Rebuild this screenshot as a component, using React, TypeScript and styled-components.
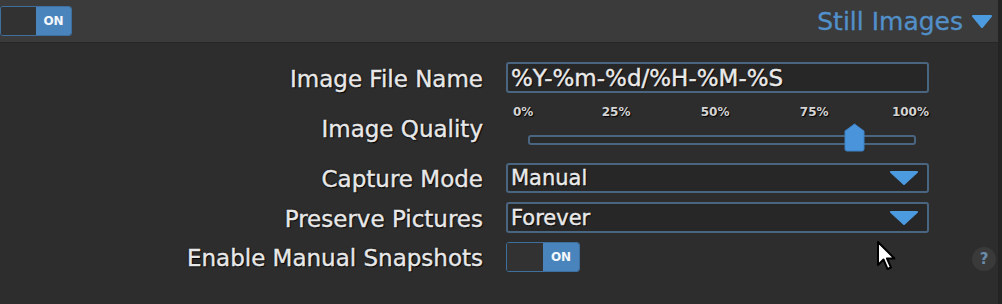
import React from 'react';
import styled, { createGlobalStyle } from 'styled-components';

const GlobalStyle = createGlobalStyle`
  html, body {
    margin: 0;
    padding: 0;
    background: #2d2d2d;
  }
  body {
    font-family: "DejaVu Sans", "Liberation Sans", sans-serif;
  }
`;

const Panel = styled.div`
  position: relative;
  width: 1002px;
  height: 304px;
  box-sizing: border-box;
  background: #2d2d2d;
  border-right: 4px solid #242424;
  overflow: hidden;
`;

const TopBar = styled.div`
  height: 43px;
  box-sizing: border-box;
  display: flex;
  align-items: center;
  justify-content: space-between;
  padding: 0 6px 0 0;
  background: #3b3b3b;
  border-bottom: 1px solid #262626;
`;

const Toggle = styled.div`
  display: flex;
  width: ${(p: { w: number }) => p.w}px;
  height: 30px;
  box-sizing: border-box;
  border: 1px solid #3f6f9e;
  border-radius: 3px;
  overflow: hidden;
`;

const ToggleOff = styled.div`
  flex: 1;
  background: #323232;
`;

const ToggleOn = styled.div`
  flex: 1;
  display: flex;
  align-items: center;
  justify-content: center;
  background: #4a84bd;
  color: #f4f8fc;
  font-weight: bold;
  font-size: 12px;
`;

const SectionTitle = styled.div`
  display: flex;
  align-items: center;
  gap: 9px;
  color: #5290c9;
  font-size: 25px;
  -webkit-text-stroke: 0.3px #5290c9;
`;

const Form = styled.div`
  display: grid;
  grid-template-columns: 483px 423px;
  column-gap: 23px;
  row-gap: 9px;
  padding-top: 19px;
`;

const Label = styled.div`
  display: flex;
  align-items: center;
  justify-content: flex-end;
  padding-top: 2px;
  color: #e8e8e8;
  font-size: 23px;
  white-space: nowrap;
  -webkit-text-stroke: 0.4px #e8e8e8;
  text-shadow: 1px 1px 1px #000, 0 0 2px #000;
`;

const Field = styled.div`
  height: ${(p: { h: number }) => p.h}px;
  box-sizing: border-box;
  display: flex;
  align-items: center;
  justify-content: space-between;
  padding: 0 9px 0 3px;
  background: #272727;
  border: 2px solid #4a6580;
  border-radius: 3px;
  color: #eaeaea;
  font-size: ${(p: { h: number; fs?: number }) => p.fs ?? 23}px;
  -webkit-text-stroke: 0.4px #eaeaea;
  text-shadow: 1px 1px 1px #000;
`;

const SliderBox = styled.div`
  height: 52px;
  display: flex;
  flex-direction: column;
`;

const Ticks = styled.div`
  display: flex;
  justify-content: space-between;
  padding: 3px 0 0 7px;
  color: #d4d4d4;
  font-size: 12px;
  font-weight: bold;
  line-height: 14px;
  text-shadow: 1px 1px 1px #000;
`;

const Tick = styled.span<{ $shift: number }>`
  margin-left: ${(p) => p.$shift}px;
`;

const Track = styled.div`
  position: relative;
  height: 10px;
  margin: 16px 13px 0 22px;
  box-sizing: border-box;
  background: #2a2a2a;
  border: 2px solid #4a6580;
  border-radius: 3px;
`;

const Thumb = styled.svg`
  position: absolute;
  top: -14px;
  width: 21px;
  height: 29px;
`;

const ToggleCell = styled.div`
  display: flex;
  align-items: center;
`;

const Help = styled.div`
  position: absolute;
  right: 2px;
  top: 247px;
  width: 24px;
  height: 24px;
  border-radius: 50%;
  background: #3a3a3a;
  color: #6a8cab;
  font-size: 15px;
  font-weight: bold;
  display: flex;
  align-items: center;
  justify-content: center;
`;

const Cursor = styled.svg`
  position: absolute;
  left: 876px;
  top: 240px;
  width: 22px;
  height: 33px;
`;

const Caret = ({ w, h }: { w: number; h: number }) => (
  <svg width={w} height={h} viewBox={`0 0 ${w} ${h}`}>
    <polygon points={`1,1 ${w - 1},1 ${w / 2},${h - 1}`} fill="#4c9be0" stroke="#4c9be0" strokeLinejoin="round" strokeWidth="2" />
  </svg>
);

const OnSwitch = ({ w }: { w: number }) => (
  <Toggle w={w}>
    <ToggleOff />
    <ToggleOn>ON</ToggleOn>
  </Toggle>
);

const ticks = [
  { text: '0%', shift: 0 },
  { text: '25%', shift: 5 },
  { text: '50%', shift: 7 },
  { text: '75%', shift: 7 },
  { text: '100%', shift: 0 },
];

const quality = 84.3;

export default function App() {
  return (
    <Panel>
      <GlobalStyle />
      <TopBar>
        <OnSwitch w={72} />
        <SectionTitle>
          Still Images
          <Caret w={20} h={13} />
        </SectionTitle>
      </TopBar>
      <Form>
        <Label>Image File Name</Label>
        <Field h={31}>%Y-%m-%d/%H-%M-%S</Field>

        <Label>Image Quality</Label>
        <SliderBox>
          <Ticks>
            {ticks.map((t) => (
              <Tick key={t.text} $shift={t.shift}>
                {t.text}
              </Tick>
            ))}
          </Ticks>
          <Track>
            <Thumb viewBox="0 0 21 29" style={{ left: `calc(${quality}% - 10px)` }}>
              <path d="M10.5 1 L20 8 L20 26 Q20 28 18 28 L3 28 Q1 28 1 26 L1 8 Z" fill="#4a94dc" stroke="#3d83c6" strokeWidth="1" strokeLinejoin="round" />
            </Thumb>
          </Track>
        </SliderBox>

        <Label>Capture Mode</Label>
        <Field h={30} fs={21}>
          Manual
          <Caret w={28} h={14} />
        </Field>

        <Label>Preserve Pictures</Label>
        <Field h={31} fs={21}>
          Forever
          <Caret w={28} h={14} />
        </Field>

        <Label>Enable Manual Snapshots</Label>
        <ToggleCell>
          <OnSwitch w={74} />
        </ToggleCell>
      </Form>
      <Cursor viewBox="0 0 22 33">
        <path d="M2 2 L2 25 L7.5 19.5 L11.5 29 L15 27.5 L11 18.5 L18.5 18.5 Z" fill="#fff" stroke="#000" strokeWidth="2" strokeLinejoin="round" />
      </Cursor>
      <Help>?</Help>
    </Panel>
  );
}
